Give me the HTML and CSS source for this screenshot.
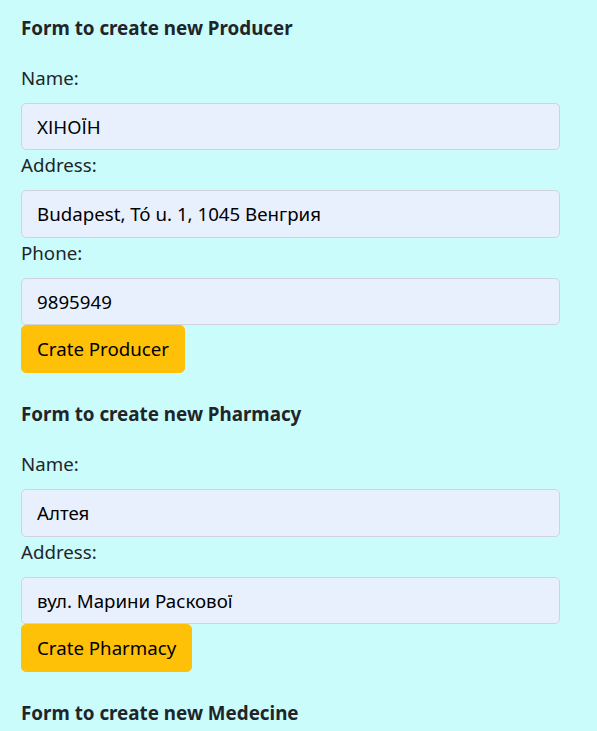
FILE: index.html
```html
<!DOCTYPE html>
<html lang="en">
<head>
<meta charset="utf-8">
<title>Forms</title>
<link rel="stylesheet" href="styles.css">
</head>
<body>
<main class="page">
  <form class="form">
    <p class="form-title">Form to create new Producer</p>
    <label class="form-label" for="p-name">Name:</label>
    <input class="form-control" id="p-name" type="text" value="ХІНОЇН">
    <label class="form-label" for="p-address">Address:</label>
    <input class="form-control" id="p-address" type="text" value="Budapest, Tó u. 1, 1045 Венгрия">
    <label class="form-label" for="p-phone">Phone:</label>
    <input class="form-control" id="p-phone" type="text" value="9895949">
    <button class="btn" type="button">Crate Producer</button>
  </form>
  <form class="form">
    <p class="form-title">Form to create new Pharmacy</p>
    <label class="form-label" for="ph-name">Name:</label>
    <input class="form-control" id="ph-name" type="text" value="Алтея">
    <label class="form-label" for="ph-address">Address:</label>
    <input class="form-control" id="ph-address" type="text" value="вул. Марини Раскової">
    <button class="btn" type="button">Crate Pharmacy</button>
  </form>
  <form class="form">
    <p class="form-title">Form to create new Medecine</p>
  </form>
</main>
</body>
</html>
```
FILE: styles.css
```css
html, body {
  margin: 0;
  background: #cafcfc;
}
.page {
  width: 539px;
  padding: 12.5px 0 0 21px;
  font-family: "Noto Sans", "Open Sans", sans-serif;
  font-size: 18.7px;
  line-height: 30px;
  color: #212529;
}
.form {
  margin: 0 0 26.5px;
}
.form-title {
  margin: 0 0 20px;
  font-weight: 700;
  font-size: 18.8px;
}
.form-label {
  display: block;
  margin-bottom: 10px;
}
.form-control {
  display: block;
  width: 100%;
  height: 47.5px;
  box-sizing: border-box;
  margin: 0;
  padding: 7.5px 15px;
  font: inherit;
  line-height: 30px;
  color: #000;
  background: #e8f0fe;
  border: 1px solid #ced4da;
  border-radius: 5px;
}
.btn {
  display: inline-block;
  height: 47.5px;
  margin: 0;
  padding: 7.5px 15px;
  font: inherit;
  line-height: 30px;
  color: #000;
  background: #ffc107;
  border: 1px solid #ffc107;
  border-radius: 5px;
}
```
